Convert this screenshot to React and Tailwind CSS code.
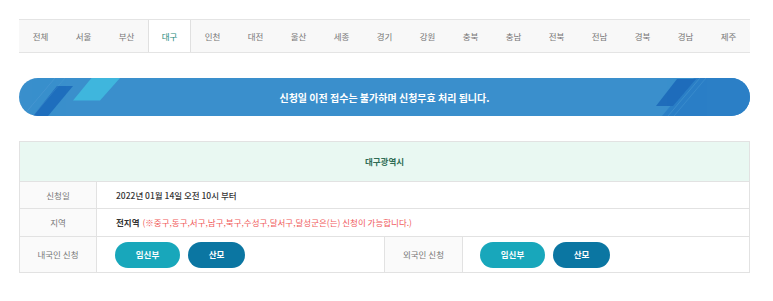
import { useState } from 'react';

const regions = ['전체', '서울', '부산', '대구', '인천', '대전', '울산', '세종', '경기', '강원', '충북', '충남', '전북', '전남', '경북', '경남', '제주'];

const BannerDecor = ({ side }) => {
  if (side === 'left') {
    return (
      <svg className="absolute left-0 top-0" width="130" height="38" viewBox="0 0 130 38">
        <polygon points="72.5,0 101,0 81,22.5 54,22.5" fill="#3fb6dd" />
        <polygon points="38,8 54,8 29,38 14,38" fill="#1f6fbd" />
        <line x1="36" y1="0" x2="4" y2="38" stroke="#5aa5d8" strokeWidth="0.6" opacity="0.6" />
        <line x1="46" y1="0" x2="14" y2="38" stroke="#5aa5d8" strokeWidth="0.6" opacity="0.4" />
      </svg>
    );
  }
  return (
    <svg className="absolute right-0 top-0" width="110" height="38" viewBox="0 0 110 38">
      <polygon points="54,0 110,0 110,38 22,38" fill="#2b7fc6" />
      <polygon points="37,1 56,1 33,28 16,28" fill="#1f6dbb" />
      <line x1="60" y1="0" x2="28" y2="38" stroke="#5aa5d8" strokeWidth="0.6" opacity="0.6" />
      <line x1="66" y1="0" x2="34" y2="38" stroke="#5aa5d8" strokeWidth="0.6" opacity="0.5" />
    </svg>
  );
};

const PillButton = ({ label, tone }) => (
  <button
    className={`h-[26px] rounded-full text-[8.5px] font-bold text-white ${
      tone === 'light' ? 'w-[65px] bg-[#18a7bb]' : 'w-[57px] bg-[#0b76a2]'
    }`}
  >
    {label}
  </button>
);

export default function App() {
  const [active, setActive] = useState('대구');

  return (
    <div className="min-h-[301px] bg-white px-[19px] pt-[19px] [font-family:'Noto_Sans_CJK_KR','Noto_Sans',sans-serif]">
      {/* Region tabs */}
      <div className="flex w-[731px] h-[34px] bg-[#f8f8f8] border-y border-[#e4e4e4]">
        {regions.map((name) => (
          <button
            key={name}
            onClick={() => setActive(name)}
            className={`w-[43px] h-full flex items-center justify-center text-[8.5px] ${
              active === name
                ? 'bg-white text-[#1d8b7a] border-x border-[#e0e0e0] h-[34px] -mb-px'
                : 'text-[#777]'
            }`}
          >
            {name}
          </button>
        ))}
      </div>

      {/* Notice banner */}
      <div className="relative mt-[25px] w-[731px] h-[38px] rounded-full overflow-hidden bg-[#3a8fcc] flex items-center justify-center">
        <BannerDecor side="left" />
        <BannerDecor side="right" />
        <p className="relative text-white text-[10px] font-bold">신청일 이전 접수는 불가하며 신청무효 처리 됩니다.</p>
      </div>

      {/* Schedule table */}
      <div className="mt-[25px] w-[731px] border border-[#e2e2e2] text-[8.5px]">
        <div className="h-[40px] flex items-center justify-center bg-[#e9f8f2] text-[#2f6c55] font-bold border-b border-[#e2e2e2]">
          대구광역시
        </div>

        <div className="flex h-[27px] border-b border-[#e2e2e2]">
          <div className="w-[77px] shrink-0 bg-[#fafafa] border-r border-[#e2e2e2] flex items-center justify-center text-[#777]">
            신청일
          </div>
          <div className="flex items-center pl-[19px] text-[#333] font-medium">2022년 01월 14일 오전 10시 부터</div>
        </div>

        <div className="flex h-[28px] border-b border-[#e2e2e2]">
          <div className="w-[77px] shrink-0 bg-[#fafafa] border-r border-[#e2e2e2] flex items-center justify-center text-[#777]">
            지역
          </div>
          <div className="flex items-center pl-[19px]">
            <span className="text-[#333] font-bold">전지역</span>
            <span className="ml-[3px] text-[#f05a5b]">(※중구,동구,서구,남구,북구,수성구,달서구,달성군은(는) 신청이 가능합니다.)</span>
          </div>
        </div>

        <div className="grid grid-cols-[77px_288px_78px_1fr] h-[35px]">
          <div className="bg-[#fafafa] border-r border-[#e2e2e2] flex items-center justify-center text-[#777]">
            내국인 신청
          </div>
          <div className="flex items-center gap-[8px] pl-[18px] border-r border-[#e2e2e2]">
            <PillButton label="임신부" tone="light" />
            <PillButton label="산모" tone="dark" />
          </div>
          <div className="bg-[#fafafa] border-r border-[#e2e2e2] flex items-center justify-center text-[#777]">
            외국인 신청
          </div>
          <div className="flex items-center gap-[8px] pl-[17px]">
            <PillButton label="임신부" tone="light" />
            <PillButton label="산모" tone="dark" />
          </div>
        </div>
      </div>
    </div>
  );
}
